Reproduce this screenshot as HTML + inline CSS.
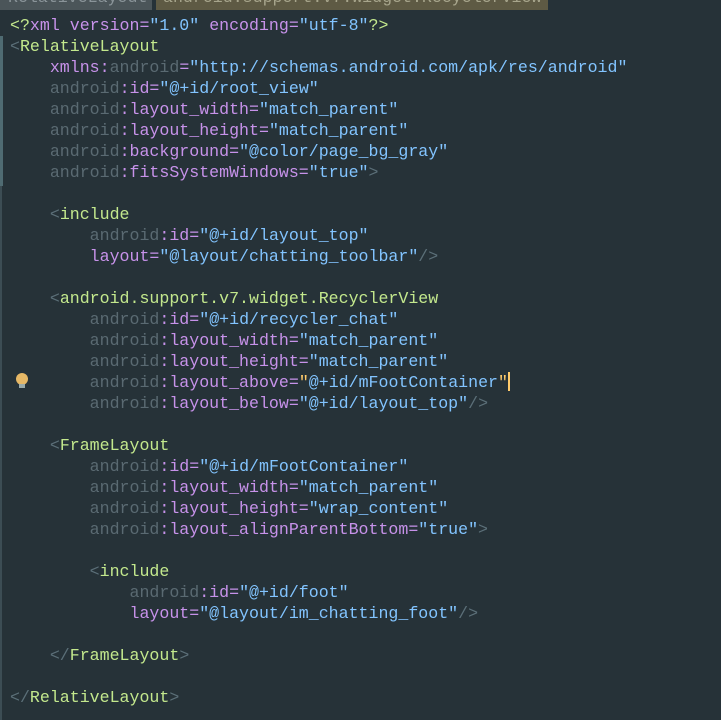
<!DOCTYPE html>
<html><head><meta charset="utf-8"><style>
html,body{margin:0;padding:0;background:#263238;width:721px;height:720px;overflow:hidden}
.tabs{position:absolute;left:0;top:0;height:10px;width:721px;background:#263238}
.t1{position:absolute;left:0;top:0;height:10px;width:152px;background:#4b5559;overflow:hidden}
.t2{position:absolute;left:156px;top:0;height:10px;width:392px;background:#5e5a44;overflow:hidden}
.t1 span,.t2 span{position:absolute;top:-12px;font:16.6px "Liberation Mono",monospace;line-height:20px;white-space:nowrap}
.t1 span{left:8px;color:#8a9499}.t2 span{left:7px;color:#a7a58c}
.gut{position:absolute;left:0;top:36px;width:3px;height:150px;background:#4f6b72}
.gut2{position:absolute;left:0;top:186px;width:2px;height:534px;background:#3c4d54}
pre{position:absolute;left:10px;top:15px;margin:0;font:16.6px "Liberation Mono",monospace;line-height:21px;color:#c3e88d}
.b{color:#5b6f78}.g{color:#c3e88d}.p{color:#c792ea}.a{color:#5a6a72}.s{color:#82c4ff}.y{color:#ffcb6b}
.cur{display:inline-block;width:2px;height:19px;background:#ffcb6b;vertical-align:-4px}
.bulb{position:absolute;left:16px;top:373px;width:12px;height:12px;border-radius:50%;background:#e6b866}
.bulb2{position:absolute;left:19px;top:384px;width:6px;height:4px;background:#9aa}
</style></head><body>
<div class="tabs"><div class="t1"><span>RelativeLayout</span></div><div class="t2"><span>android.support.v7.widget.RecyclerView</span></div></div>
<div class="gut"></div><div class="gut2"></div>
<div class="bulb"></div><div class="bulb2"></div>
<pre><span class="g">&lt;?</span><span class="p">xml version=</span><span class="s">"1.0"</span> <span class="p">encoding=</span><span class="s">"utf-8"</span><span class="g">?&gt;</span>
<span class="b">&lt;</span>RelativeLayout
    <span class="p">xmlns:</span><span class="a">android</span><span class="p">=</span><span class="s">"http://schemas.android.com/apk/res/android"</span>
    <span class="a">android</span><span class="p">:id=</span><span class="s">"@+id/root_view"</span>
    <span class="a">android</span><span class="p">:layout_width=</span><span class="s">"match_parent"</span>
    <span class="a">android</span><span class="p">:layout_height=</span><span class="s">"match_parent"</span>
    <span class="a">android</span><span class="p">:background=</span><span class="s">"@color/page_bg_gray"</span>
    <span class="a">android</span><span class="p">:fitsSystemWindows=</span><span class="s">"true"</span><span class="b">&gt;</span>

    <span class="b">&lt;</span>include
        <span class="a">android</span><span class="p">:id=</span><span class="s">"@+id/layout_top"</span>
        <span class="p">layout=</span><span class="s">"@layout/chatting_toolbar"</span><span class="b">/&gt;</span>

    <span class="b">&lt;</span>android.support.v7.widget.RecyclerView
        <span class="a">android</span><span class="p">:id=</span><span class="s">"@+id/recycler_chat"</span>
        <span class="a">android</span><span class="p">:layout_width=</span><span class="s">"match_parent"</span>
        <span class="a">android</span><span class="p">:layout_height=</span><span class="s">"match_parent"</span>
        <span class="a">android</span><span class="p">:layout_above=</span><span class="y">"</span><span class="s">@+id/mFootContainer</span><span class="y">"</span><span class="cur"></span>
        <span class="a">android</span><span class="p">:layout_below=</span><span class="s">"@+id/layout_top"</span><span class="b">/&gt;</span>

    <span class="b">&lt;</span>FrameLayout
        <span class="a">android</span><span class="p">:id=</span><span class="s">"@+id/mFootContainer"</span>
        <span class="a">android</span><span class="p">:layout_width=</span><span class="s">"match_parent"</span>
        <span class="a">android</span><span class="p">:layout_height=</span><span class="s">"wrap_content"</span>
        <span class="a">android</span><span class="p">:layout_alignParentBottom=</span><span class="s">"true"</span><span class="b">&gt;</span>

        <span class="b">&lt;</span>include
            <span class="a">android</span><span class="p">:id=</span><span class="s">"@+id/foot"</span>
            <span class="p">layout=</span><span class="s">"@layout/im_chatting_foot"</span><span class="b">/&gt;</span>

    <span class="b">&lt;/</span>FrameLayout<span class="b">&gt;</span>

<span class="b">&lt;/</span>RelativeLayout<span class="b">&gt;</span></pre>
</body></html>
